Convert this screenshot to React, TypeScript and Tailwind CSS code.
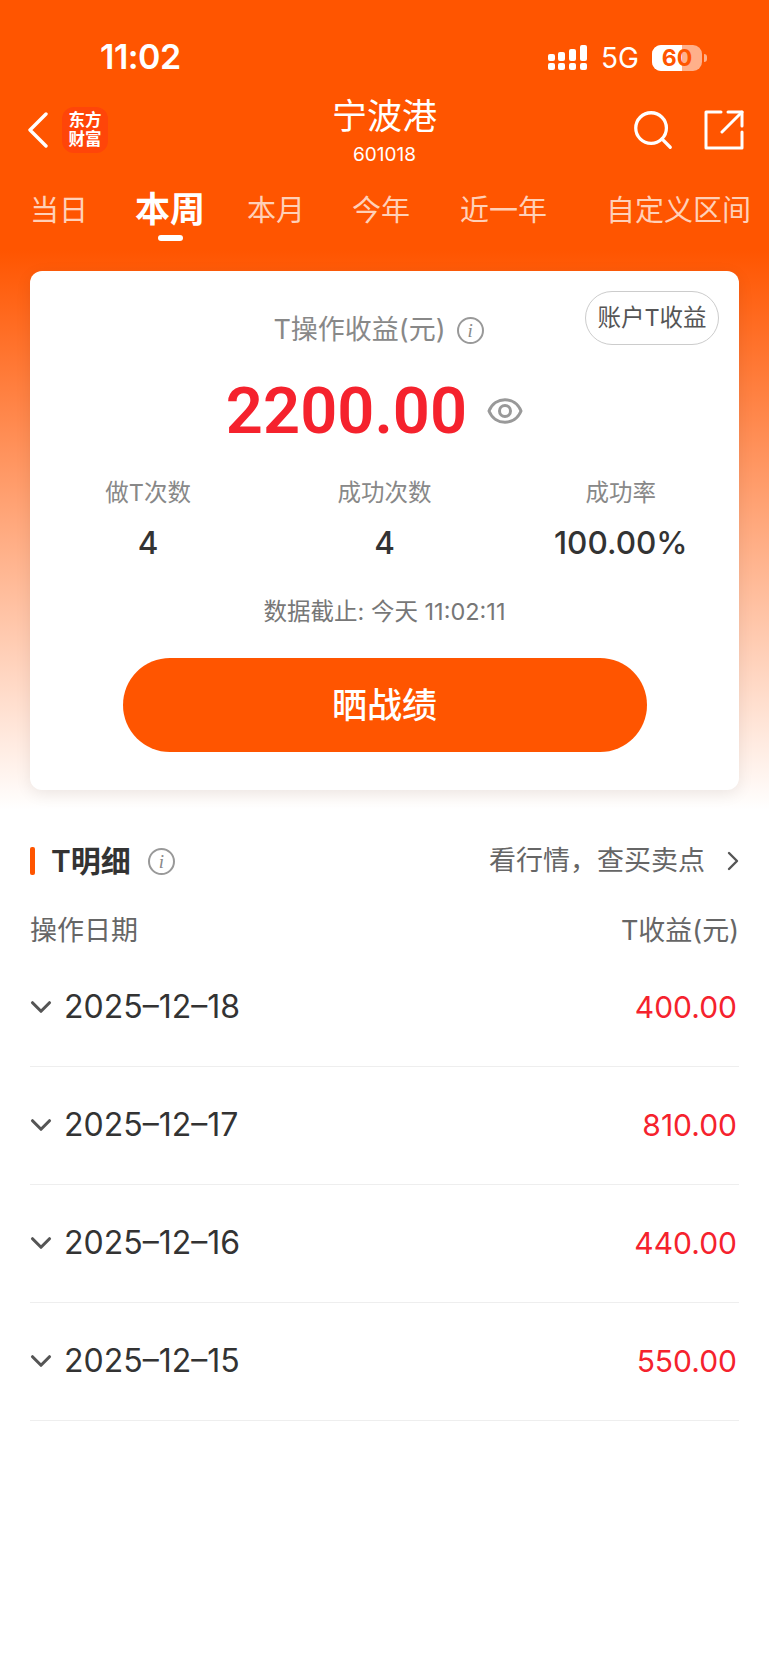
import React from 'react';
import { ChevronDown, ChevronRight, Search } from 'lucide-react';

const tabs = [
  { label: '当日', className: '' },
  { label: '本周', className: 'ml-[47px]', active: true },
  { label: '本月', className: 'ml-[42px]' },
  { label: '今年', className: 'ml-[47px]' },
  { label: '近一年', className: 'ml-[50px]' },
  { label: '自定义区间', className: 'ml-[59px]' },
];

const stats = [
  { label: '做T次数', value: '4' },
  { label: '成功次数', value: '4' },
  { label: '成功率', value: '100.00%' },
];

const rows = [
  { date: '2025–12–18', amount: '400.00' },
  { date: '2025–12–17', amount: '810.00' },
  { date: '2025–12–16', amount: '440.00' },
  { date: '2025–12–15', amount: '550.00' },
];

function InfoIcon() {
  return (
    <span className="flex h-[27px] w-[27px] shrink-0 items-center justify-center rounded-full border-2 border-[#999] font-['Liberation_Serif',serif] text-[19px] italic leading-none text-[#888]">
      i
    </span>
  );
}

function SignalIcon() {
  return (
    <svg width="39" height="26" viewBox="0 0 39 26" fill="white">
      <rect x="0" y="9" width="7" height="7" rx="2" />
      <rect x="0" y="18" width="7" height="7" rx="2" />
      <rect x="10" y="7" width="7" height="9" rx="2" />
      <rect x="10" y="18" width="7" height="7" rx="2" />
      <rect x="21" y="4" width="7" height="12" rx="2" />
      <rect x="21" y="18" width="7" height="7" rx="2" />
      <rect x="32" y="0" width="7" height="16" rx="2" />
      <rect x="32" y="18" width="7" height="7" rx="2" />
    </svg>
  );
}

function ShareIcon() {
  return (
    <svg width="40" height="40" viewBox="0 0 40 40" fill="none" stroke="white" strokeWidth="3" strokeLinecap="round" strokeLinejoin="round">
      <path d="M17 2H2V38H38V22" />
      <path d="M24 2H38V16" />
      <path d="M38 2L18 22" />
    </svg>
  );
}

function BackIcon() {
  return (
    <svg width="22" height="36" viewBox="0 0 22 36" fill="none" stroke="white" strokeWidth="3.4" strokeLinecap="round" strokeLinejoin="round">
      <path d="M19 2L3 18L19 34" />
    </svg>
  );
}

function EyeIcon() {
  return (
    <svg width="36" height="28" viewBox="0 0 36 28" fill="none" stroke="#999" strokeWidth="3">
      <path d="M2 14C8 -1 28 -1 34 14C28 29 8 29 2 14Z" strokeLinejoin="round" />
      <circle cx="18" cy="14" r="5.5" />
    </svg>
  );
}

export default function App() {
  return (
    <div className="min-h-[1665px] bg-white font-['Inter','Noto_Sans_CJK_SC',sans-serif]">
      <div className="bg-[linear-gradient(#ff5500_0,#ff5500_250px,#ffffff_810px)] pb-[19px]">
        <div className="flex h-[99px] items-start justify-between pt-[38px] pl-[100px] pr-[62px]">
          <span className="text-[34px] font-semibold leading-[38px] tracking-[-0.5px] text-white">11:02</span>
          <div className="flex items-center pt-[7px]">
            <SignalIcon />
            <span className="ml-[14px] text-[28px] leading-[26px] text-white">5G</span>
            <div className="relative ml-[13px] flex h-[26px] w-[50px] items-center justify-center rounded-[9px] bg-[#ffb08a]">
              <div className="absolute inset-y-0 left-0 w-[30px] rounded-l-[9px] bg-white" />
              <span className="relative text-[23px] font-bold leading-none text-[#ff5500]">60</span>
            </div>
            <div className="ml-[2px] h-[8px] w-[3px] rounded-r-full bg-[#ffb08a]" />
          </div>
        </div>

        <div className="relative flex h-[62px] items-center pl-[27px] pr-[25px]">
          <BackIcon />
          <div className="ml-[13px] flex h-[46px] w-[46px] flex-col items-center justify-center rounded-[12px] bg-[#ff4509] text-[16.5px] font-bold leading-[19px] text-white">
            <span>东方</span>
            <span>财富</span>
          </div>
          <div className="absolute left-0 right-0 top-[-5px] flex flex-col items-center text-white">
            <span className="text-[35px] leading-[44px]">宁波港</span>
            <span className="mt-[5px] text-[19px] leading-[24px]">601018</span>
          </div>
          <div className="ml-auto flex items-center gap-[28px]">
            <Search className="h-[46px] w-[46px] text-white" strokeWidth={1.7} />
            <ShareIcon />
          </div>
        </div>

        <div className="mt-[26px] flex h-[56px] items-start pl-[30px]">
          {tabs.map((tab) => (
            <div key={tab.label} className={`relative shrink-0 ${tab.className}`}>
              <span
                className={
                  tab.active
                    ? 'block text-[35px] font-bold leading-[44px] text-white'
                    : 'mt-[4px] block text-[29px] leading-[40px] text-[#ffd0b8]'
                }
              >
                {tab.label}
              </span>
              {tab.active && <div className="absolute left-[23px] top-[48px] h-[6px] w-[25px] rounded-full bg-white" />}
            </div>
          ))}
        </div>

        <div className="relative mx-[30px] mt-[28px] flex h-[519px] flex-col items-center rounded-[12px] bg-white shadow-[0_4px_16px_rgba(0,0,0,0.08)]">
          <div className="absolute right-[20px] top-[20px] flex h-[54px] w-[134px] items-center justify-center rounded-[27px] border border-[#ccc] text-[23.5px] text-[#555]">
            账户T收益
          </div>
          <div className="mt-[42px] flex items-center gap-[11px] pr-[12px]">
            <span className="text-[27px] leading-[34px] text-[#888]">T操作收益(元)</span>
            <InfoIcon />
          </div>
          <div className="mt-[26px] mr-[20px] flex items-center gap-[20px]">
            <span className="font-['Roboto',sans-serif] text-[65px] font-semibold leading-[76px] text-[#f5222d]">2200.00</span>
            <EyeIcon />
          </div>
          <div className="mt-[28px] grid w-full grid-cols-3">
            {stats.map((stat) => (
              <div key={stat.label} className="flex flex-col items-center">
                <span className="text-[23.5px] leading-[32px] text-[#888]">{stat.label}</span>
                <span className="mt-[14px] text-[31.5px] font-medium leading-[40px] text-[#333]">{stat.value}</span>
              </div>
            ))}
          </div>
          <div className="mt-[33px] text-[23.5px] leading-[32px] text-[#777]">数据截止: 今天 11:02:11</div>
          <button className="mt-[30px] flex h-[94px] w-[524px] items-center justify-center rounded-full bg-[#ff5500] text-[35px] font-medium text-white">
            晒战绩
          </button>
        </div>
      </div>

      <div className="px-[30px]">
        <div className="mt-[37px] flex h-[30px] items-center">
          <div className="h-[28px] w-[5px] rounded-[2px] bg-[#ff5500]" />
          <span className="ml-[16px] text-[30px] font-semibold leading-[30px] text-[#333]">T明细</span>
          <div className="ml-[17px]">
            <InfoIcon />
          </div>
          <span className="ml-auto text-[27px] leading-[30px] text-[#666]">看行情，查买卖点</span>
          <ChevronRight className="ml-[12px] mr-[-10px] h-[32px] w-[32px] text-[#555]" strokeWidth={1.8} />
        </div>
        <div className="mt-[37px] flex items-center justify-between text-[27px] leading-[36px] text-[#666]">
          <span>操作日期</span>
          <span>T收益(元)</span>
        </div>
        {rows.map((row) => (
          <div key={row.date} className="flex h-[118px] items-center border-b border-[#eee] pb-[1px]">
            <ChevronDown className="ml-[-6px] h-[34px] w-[34px] text-[#555]" strokeWidth={2.2} />
            <span className="ml-[6px] text-[32px] text-[#333]">{row.date}</span>
            <span className="ml-auto pr-[2px] text-[30px] text-[#f5222d]">{row.amount}</span>
          </div>
        ))}
      </div>
    </div>
  );
}
